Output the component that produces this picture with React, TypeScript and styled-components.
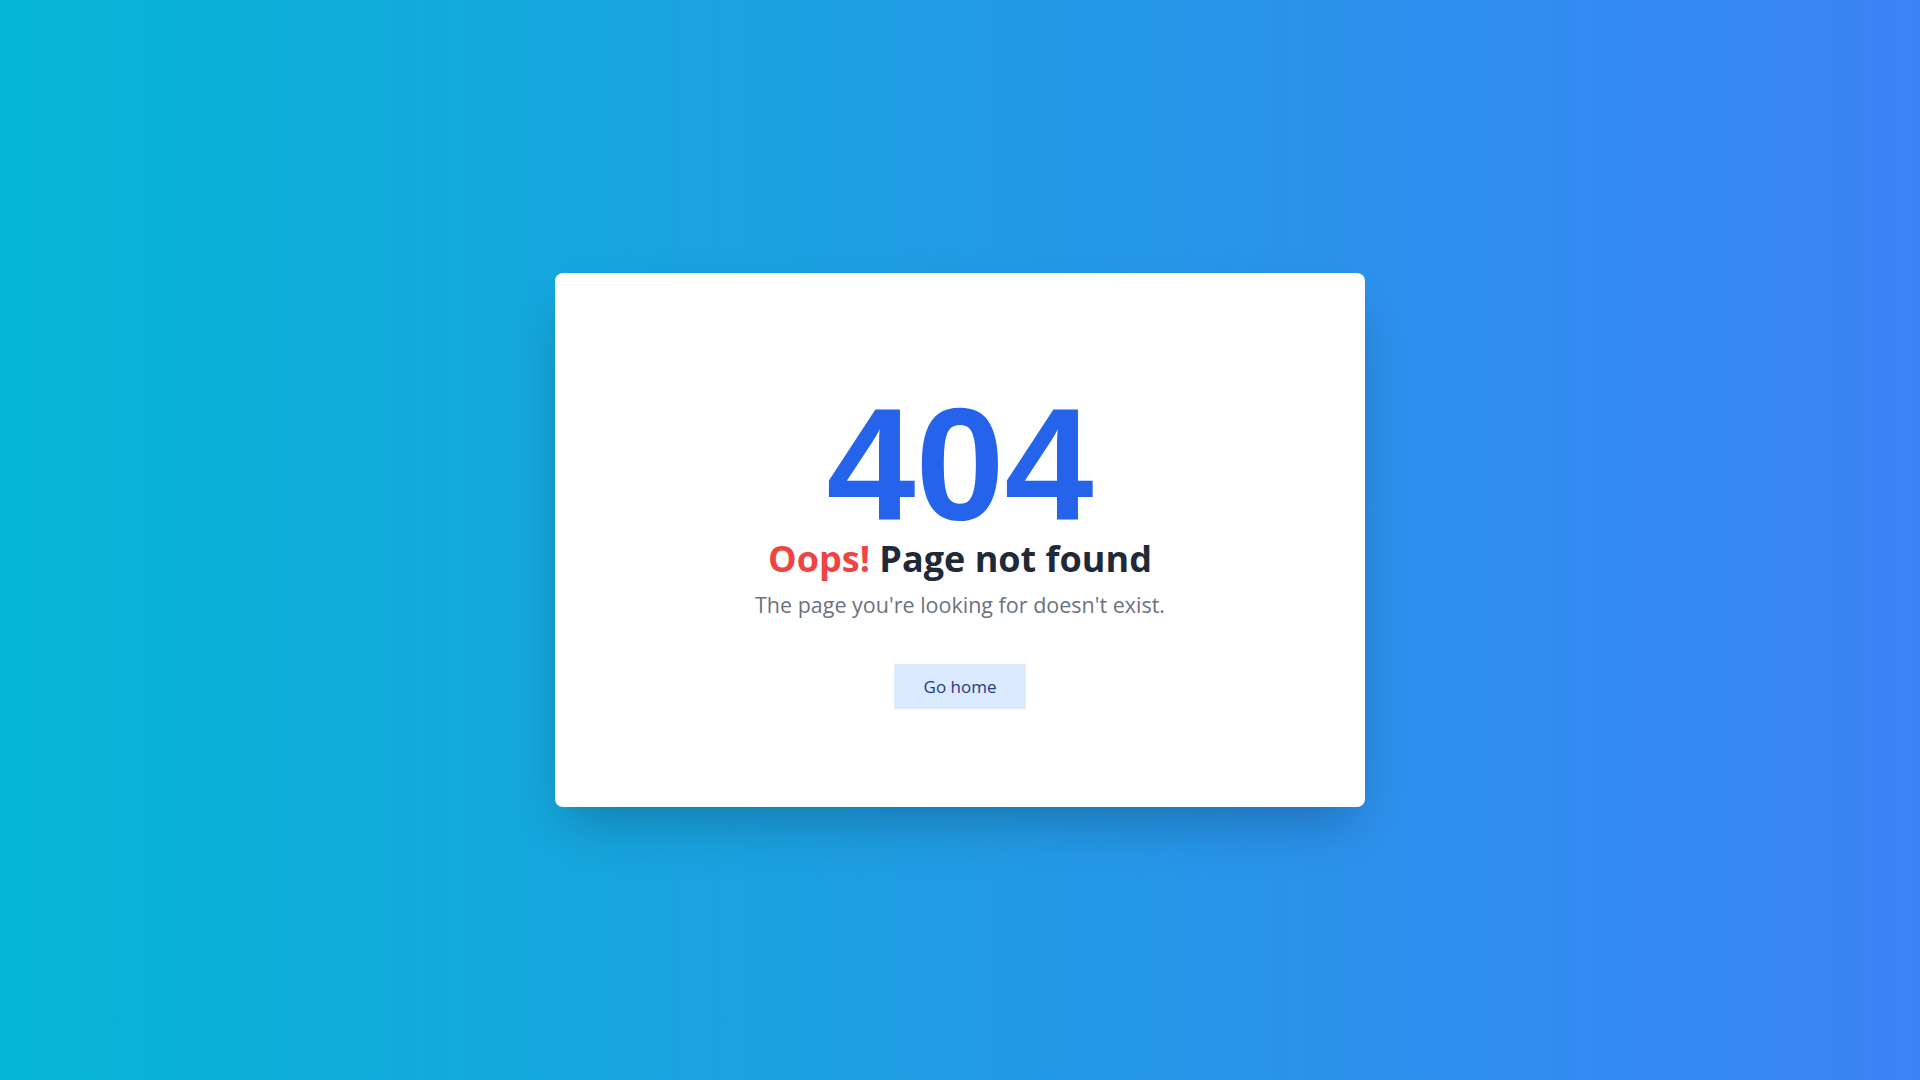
import React from "react";
import styled, { createGlobalStyle } from "styled-components";

const GlobalStyle = createGlobalStyle`
  html, body {
    margin: 0;
    padding: 0;
  }
  body {
    font-family: "Open Sans", "Noto Sans", sans-serif;
  }
`;

const Page = styled.main`
  min-height: 100vh;
  width: 100%;
  display: flex;
  align-items: center;
  justify-content: center;
  background: linear-gradient(to right, #06b6d4, #3b82f6);
`;

const Card = styled.section`
  width: 810px;
  height: 534px;
  box-sizing: border-box;
  background: #ffffff;
  border-radius: 8px;
  box-shadow: 0 25px 50px -12px rgba(0, 0, 0, 0.25);
  display: flex;
  flex-direction: column;
  align-items: center;
  padding-top: 116px;
`;

const Code = styled.h1`
  margin: 0;
  font-family: "Liberation Sans", Arial, sans-serif;
  font-weight: 700;
  font-size: 160px;
  line-height: 150px;
  color: #2563eb;
`;

const Title = styled.h2`
  margin: 0;
  font-family: "Open Sans", "Noto Sans", sans-serif;
  font-weight: 700;
  font-size: 36px;
  line-height: 40px;
  color: #1f2937;
`;

const Accent = styled.span`
  color: #ef4444;
`;

const Lead = styled.p`
  margin: 12px 0 0;
  font-family: "Open Sans", "Noto Sans", sans-serif;
  font-size: 21.5px;
  line-height: 28px;
  color: #6b7280;
`;

const HomeButton = styled.a`
  margin-top: 45px;
  display: inline-flex;
  align-items: center;
  justify-content: center;
  width: 132px;
  height: 45px;
  background: #dbeafe;
  color: #1e3a8a;
  font-family: "Open Sans", "Noto Sans", sans-serif;
  font-size: 17px;
  text-decoration: none;
  cursor: pointer;
`;

export default function App() {
  return (
    <>
      <GlobalStyle />
      <Page>
        <Card>
          <Code>404</Code>
          <Title>
            <Accent>Oops!</Accent> Page not found
          </Title>
          <Lead>The page you're looking for doesn't exist.</Lead>
          <HomeButton href="#">Go home</HomeButton>
        </Card>
      </Page>
    </>
  );
}
